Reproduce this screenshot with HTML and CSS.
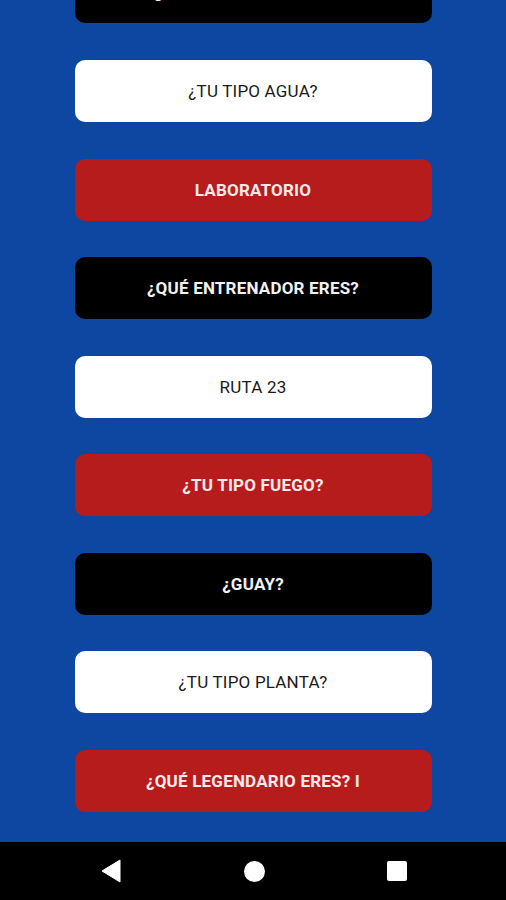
FILE: index.html
```html
<!DOCTYPE html>
<html lang="es">
<head>
<meta charset="utf-8">
<link rel="stylesheet" href="styles.css">
</head>
<body>
<div class="screen">
  <main class="list">
    <div class="btn btn-black">¿QUÉ POKÉMON ERES? II</div>
    <div class="btn btn-white">¿TU TIPO AGUA?</div>
    <div class="btn btn-red">LABORATORIO</div>
    <div class="btn btn-black">¿QUÉ ENTRENADOR ERES?</div>
    <div class="btn btn-white">RUTA 23</div>
    <div class="btn btn-red">¿TU TIPO FUEGO?</div>
    <div class="btn btn-black">¿GUAY?</div>
    <div class="btn btn-white">¿TU TIPO PLANTA?</div>
    <div class="btn btn-red">¿QUÉ LEGENDARIO ERES? I</div>
  </main>
  <nav class="navbar">
    <svg class="nav-icon" width="20" height="24" viewBox="0 0 20 24"><path d="M19 1 L19 23 L1 12 Z" fill="#fff" stroke="#fff" stroke-width="1" stroke-linejoin="round"/></svg>
    <span class="nav-home"></span>
    <span class="nav-recent"></span>
  </nav>
</div>
</body>
</html>
```
FILE: styles.css
```css
* { box-sizing: border-box; }
html, body { margin: 0; padding: 0; }
body {
  width: 506px;
  height: 900px;
  overflow: hidden;
  font-family: Roboto, "Liberation Sans", sans-serif;
}
.screen {
  display: flex;
  flex-direction: column;
  height: 900px;
}
.list {
  flex: 1;
  background: #0e47a1;
  overflow: hidden;
  display: flex;
  flex-direction: column;
  align-items: center;
  gap: 36.57px;
  margin-top: -38.57px;
}
.btn {
  flex: none;
  width: 357px;
  height: 62px;
  border-radius: 10px;
  display: flex;
  align-items: center;
  justify-content: center;
  font-size: 17px;
  letter-spacing: 0.2px;
}
.btn-white { background: #ffffff; color: #1a1a1a; font-weight: 400; }
.btn-red { background: #b71c1c; color: #fbeaea; font-weight: 700; }
.btn-black { background: #000000; color: #f2f2f2; font-weight: 700; }
.navbar {
  flex: none;
  height: 58px;
  background: #000;
  display: flex;
  align-items: center;
  padding-left: 101px;
}
.nav-icon { display: block; }
.nav-home {
  width: 21px;
  height: 21px;
  border-radius: 50%;
  background: #fff;
  margin-left: 123px;
}
.nav-recent {
  width: 20px;
  height: 20px;
  border-radius: 2px;
  background: #fff;
  margin-left: 122px;
}
```
